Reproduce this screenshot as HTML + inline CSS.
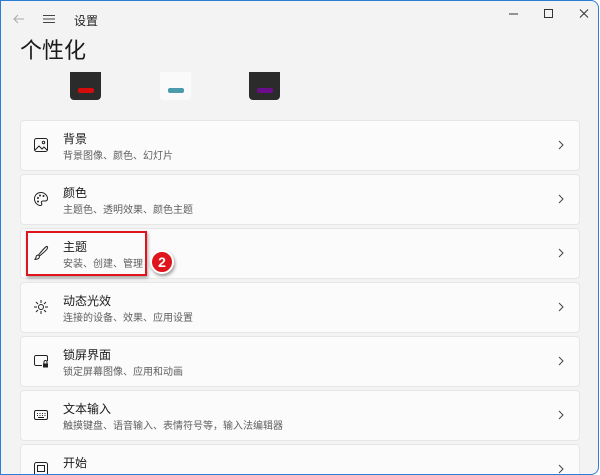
<!DOCTYPE html>
<html style="width:600px;height:475px;overflow:hidden"><head><meta charset="utf-8"><style>
*{margin:0;padding:0;box-sizing:border-box}
body{width:600px;height:475px;overflow:hidden;background:#fff;font-family:"Liberation Sans","Noto Sans CJK SC",sans-serif;position:relative}
.win{position:absolute;left:0;top:0;width:599px;height:475px;overflow:hidden;background:#f3f3f3;border:1px solid #2a7fd4;border-radius:0 8px 8px 0}
.a{position:absolute}
.card{position:absolute;left:19px;width:560px;height:51px;background:#fbfbfb;border:1px solid #e6e6e6;border-radius:4px}
.t{position:absolute;left:42px;top:9px;font-size:12px;color:#1a1a1a}
.s{position:absolute;left:42px;top:26px;font-size:10px;color:#5f5f5f}
.ic{position:absolute;left:12px;top:16px}
.ch{position:absolute;right:14px;top:18px}
.sw{position:absolute;top:71px;width:31px;height:28px;border-radius:0 0 4px 4px}
.bar{position:absolute;left:8px;top:16px;width:16px;height:5px;border-radius:2px}
</style></head><body>
<div class="win">
<svg class="a" style="left:11px;top:12px" width="14" height="12"><path d="M12 6H2M6 2L2 6l4 4" stroke="#aaa" fill="none" stroke-width="1"/></svg>
<svg class="a" style="left:41px;top:13px" width="14" height="10"><path d="M1 1.5h12M1 5h12M1 8.5h12" stroke="#444" stroke-width="1.1"/></svg>
<div class="a" style="left:73px;top:11px;font-size:12px;color:#222">设置</div>
<svg class="a" style="left:505px;top:7px" width="90" height="12"><path d="M3 6h9" stroke="#333"/><path d="M38.5 1.5h8v8h-8z" stroke="#333" fill="none"/><path d="M74 1.5l8 8M82 1.5l-8 8" stroke="#333"/></svg>
<div class="a" style="left:19px;top:32px;font-size:22px;color:#1a1a1a">个性化</div>
<div class="sw" style="left:69px;background:#2b2b2b"><div class="bar" style="background:#d40c0c"></div></div>
<div class="sw" style="left:159px;background:#fafafa"><div class="bar" style="background:#4a9bab"></div></div>
<div class="sw" style="left:248px;background:#2b2b2b"><div class="bar" style="background:#6b0c8c"></div></div>

<div class="card" style="top:119px"><svg class="ic" width="16" height="16"><rect x="1.5" y="1.5" width="13" height="13" rx="2" stroke="#222" fill="none"/><path d="M2 13l4-4 3 3 2-2 3 3" stroke="#222" fill="none"/><circle cx="10.5" cy="5.5" r="1.2" stroke="#222" fill="none"/></svg><div class="t">背景</div><div class="s">背景图像、颜色、幻灯片</div><svg class="ch" width="8" height="12"><path d="M2 2l4 4-4 4" stroke="#444" fill="none"/></svg></div>
<div class="card" style="top:173px"><svg class="ic" width="16" height="16"><path d="M8 1.5C4 1.5 1.5 4.5 1.5 8c0 3.5 3 6.5 6 6.5 1.5 0 1.5-1.5 1-2.5-.5-1 0-2 1.5-2h2c1.5 0 2.5-1 2.5-2.5 0-3-3-6-6.5-6z" stroke="#222" fill="none"/><circle cx="5" cy="7" r="1" fill="#222"/><circle cx="7" cy="4.5" r="1" fill="#222"/><circle cx="10.5" cy="5" r="1" fill="#222"/><circle cx="5" cy="10.5" r="1" fill="#222"/></svg><div class="t">颜色</div><div class="s">主题色、透明效果、颜色主题</div><svg class="ch" width="8" height="12"><path d="M2 2l4 4-4 4" stroke="#444" fill="none"/></svg></div>
<div class="card" style="top:227px"><svg class="ic" width="16" height="16"><path d="M13.5 1.5c-2 1-6 6-8 8.5l1 1c2.5-2 7.5-6 8-8 .3-1-.3-1.8-1-1.5zM5.5 10c-1.5 0-2.5 1-2.5 2.5 0 .8-.5 1.5-1.5 2 2.5 0 5-.5 5-3.5" stroke="#222" fill="none"/></svg><div class="t">主题</div><div class="s">安装、创建、管理</div><svg class="ch" width="8" height="12"><path d="M2 2l4 4-4 4" stroke="#444" fill="none"/></svg></div>
<div class="card" style="top:281px"><svg class="ic" width="16" height="16"><circle cx="8" cy="8" r="2.5" stroke="#222" fill="none"/><path d="M8 1v3M8 12v3M1 8h3M12 8h3M3 3l2 2M11 11l2 2M13 3l-2 2M5 11l-2 2" stroke="#222"/></svg><div class="t">动态光效</div><div class="s">连接的设备、效果、应用设置</div><svg class="ch" width="8" height="12"><path d="M2 2l4 4-4 4" stroke="#444" fill="none"/></svg></div>
<div class="card" style="top:335px"><svg class="ic" width="16" height="16"><path d="M9 12.5H3a1.5 1.5 0 01-1.5-1.5V4A1.5 1.5 0 013 2.5h10A1.5 1.5 0 0114.5 4v4" stroke="#222" fill="none"/><rect x="10" y="10.5" width="5" height="4" fill="#222"/><path d="M11 10.5V9a1.5 1.5 0 013 0v1.5" stroke="#222" fill="none"/></svg><div class="t">锁屏界面</div><div class="s">锁定屏幕图像、应用和动画</div><svg class="ch" width="8" height="12"><path d="M2 2l4 4-4 4" stroke="#444" fill="none"/></svg></div>
<div class="card" style="top:389px"><svg class="ic" width="16" height="16"><rect x="1.5" y="3.5" width="13" height="9" rx="1.5" stroke="#222" fill="none"/><path d="M4 6.5h1M6.5 6.5h1M9 6.5h1M11.5 6.5h1M4 8.5h1M6.5 8.5h1M9 8.5h1M11.5 8.5h1M5 10.5h6" stroke="#222"/></svg><div class="t">文本输入</div><div class="s">触摸键盘、语音输入、表情符号等，输入法编辑器</div><svg class="ch" width="8" height="12"><path d="M2 2l4 4-4 4" stroke="#444" fill="none"/></svg></div>
<div class="card" style="top:443px"><svg class="ic" width="16" height="16"><rect x="1.5" y="1.5" width="13" height="13" rx="2" stroke="#222" fill="none"/><rect x="4.5" y="4.5" width="7" height="6" stroke="#222" fill="none"/></svg><div class="t">开始</div><div class="s">最近使用的应用和项目、文件夹</div><svg class="ch" width="8" height="12"><path d="M2 2l4 4-4 4" stroke="#444" fill="none"/></svg></div>

<div class="a" style="left:25px;top:230px;width:121px;height:45px;border:2px solid #e0141c;box-shadow:1px 2px 3px rgba(0,0,0,.35)"></div>
<div class="a" style="left:149px;top:249px;width:24px;height:24px;border-radius:50%;background:#e0141c;border:2px solid #fff;box-shadow:1px 2px 3px rgba(0,0,0,.4);color:#fff;font-weight:bold;font-size:14px;text-align:center;line-height:20px">2</div>
</div>
</body></html>
